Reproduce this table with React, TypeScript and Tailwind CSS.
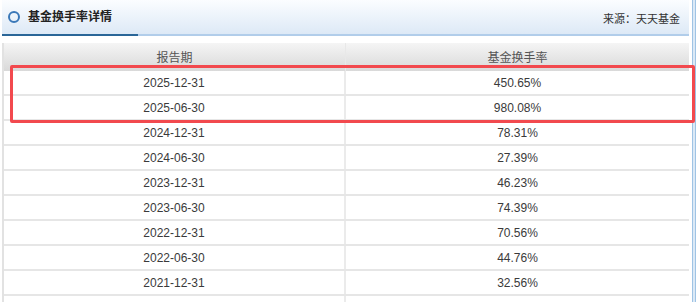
const ROWS = [
  { date: "2025-12-31", rate: "450.65%" },
  { date: "2025-06-30", rate: "980.08%" },
  { date: "2024-12-31", rate: "78.31%" },
  { date: "2024-06-30", rate: "27.39%" },
  { date: "2023-12-31", rate: "46.23%" },
  { date: "2023-06-30", rate: "74.39%" },
  { date: "2022-12-31", rate: "70.56%" },
  { date: "2022-06-30", rate: "44.76%" },
  { date: "2021-12-31", rate: "32.56%" },
];

export default function App() {
  return (
    <div className="relative flex h-[302px] w-[700px] overflow-hidden bg-white font-['Liberation_Sans','Noto_Sans_CJK_SC',sans-serif] text-[#333]">
      <div className="w-[689px] shrink-0 pl-[2px]">
        {/* Title bar */}
        <div className="flex h-[34px] items-center justify-between bg-gradient-to-b from-[#fbfdff] to-[#dde9f6] pl-[6px] pr-[9px]">
          <div className="flex items-center gap-[8px]">
            <span className="h-[12px] w-[12px] rounded-full border-[2px] border-[#3a78b8]" />
            <span className="text-[12px] font-bold text-[#222]">基金换手率详情</span>
          </div>
          <span className="mt-[4px] text-[11px] text-[#333]">来源：天天基金</span>
        </div>
        <div className="flex h-[2px]">
          <div className="w-[136px] bg-[#2a6698]" />
          <div className="flex-1 bg-[#b1cdea]" />
        </div>

        {/* Table */}
        <div className="mt-[7px] h-[270px] border-l-[2px] border-[#e2e2e2]">
          <div className="grid h-[28px] grid-cols-[342px_1fr] bg-gradient-to-b from-[#f5f5f5] to-[#d9d9d9] text-[12px] text-[#555]">
            <div className="flex items-center justify-center border-r border-[#e8e8e8] pt-[2px]">报告期</div>
            <div className="flex items-center justify-center pt-[2px]">基金换手率</div>
          </div>
          {ROWS.map((row) => (
            <div
              key={row.date}
              className="grid h-[25px] grid-cols-[342px_1fr] border-b-[2px] border-[#e6e6e6] text-[12px] text-[#3a3a3a]"
            >
              <div className="flex items-center justify-center border-r-[2px] border-[#ebebeb]">{row.date}</div>
              <div className="flex items-center justify-center">{row.rate}</div>
            </div>
          ))}
          <div className="grid h-[20px] grid-cols-[342px_1fr]">
            <div className="border-r-[2px] border-[#ebebeb]" />
            <div />
          </div>
        </div>
      </div>

      {/* Neighbouring panel edge */}
      <div className="ml-[3px] w-[4px] shrink-0 border-x border-[#9fc3e4] bg-[#dbe9f6]" />

      {/* Highlight annotation */}
      <div className="absolute left-[10px] top-[65px] h-[58px] w-[685px] rounded-[2px] border-[3px] border-[#f2494e]" />
    </div>
  );
}
